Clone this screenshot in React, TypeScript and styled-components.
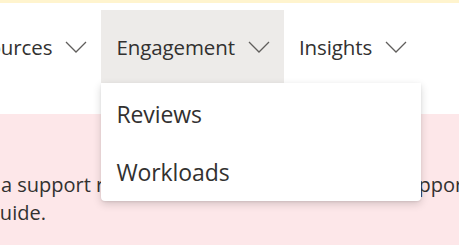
import styled, { createGlobalStyle } from "styled-components";

const GlobalStyle = createGlobalStyle`
  html, body {
    margin: 0;
    padding: 0;
    overflow: hidden;
    background: #ffffff;
  }
  body {
    font-family: "Segoe UI", "Open Sans", "Noto Sans", sans-serif;
    color: #323130;
  }
`;

const Page = styled.div`
  width: 459px;
  height: 245px;
  display: flex;
  flex-direction: column;
  overflow: hidden;
`;

const Banner = styled.div`
  height: 3px;
  background: #fff4ce;
  flex-shrink: 0;
`;

const NavBar = styled.nav`
  height: 111px;
  background: #ffffff;
  flex-shrink: 0;
  position: relative;
  z-index: 2;
`;

const NavRow = styled.ul`
  list-style: none;
  margin: 0 0 0 -60px;
  padding: 7px 0 0;
  display: flex;
`;

const NavItem = styled.li<{ $open?: boolean }>`
  position: relative;
  height: 73px;
  display: flex;
  align-items: center;
  gap: 13px;
  padding: 0 14px 0 15px;
  font-size: 20.5px;
  letter-spacing: -0.1px;
  white-space: nowrap;
  background: ${(p) => (p.$open ? "#edebe9" : "transparent")};
`;

const Chevron = () => (
  <svg width="22" height="12" viewBox="0 0 22 12" fill="none">
    <path d="M1 1 L11 11 L21 1" stroke="#605e5c" strokeWidth="1.3" />
  </svg>
);

const Menu = styled.ul`
  position: absolute;
  top: 100%;
  left: 0;
  width: 320px;
  margin: 0;
  padding: 2px 0 0;
  list-style: none;
  background: #ffffff;
  border-radius: 0 0 4px 4px;
  box-shadow: 0 3px 8px rgba(0, 0, 0, 0.16), 0 1px 2px rgba(0, 0, 0, 0.08);
`;

const MenuItem = styled.li`
  height: 58px;
  display: flex;
  align-items: center;
  padding-left: 15px;
  font-size: 23px;
  color: #323130;
`;

const Notice = styled.section`
  flex: 1;
  background: #fde7e9;
  padding-top: 57px;
`;

const NoticeText = styled.p`
  margin: 0 0 0 -11px;
  width: 500px;
  text-indent: 12px;
  font-size: 20px;
  line-height: 28px;
  color: #323130;
`;

export default function App() {
  return (
    <Page>
      <GlobalStyle />
      <Banner />
      <NavBar>
        <NavRow>
          <NavItem>
            Resources
            <Chevron />
          </NavItem>
          <NavItem $open>
            Engagement
            <Chevron />
            <Menu>
              <MenuItem>Reviews</MenuItem>
              <MenuItem>Workloads</MenuItem>
            </Menu>
          </NavItem>
          <NavItem>
            Insights
            <Chevron />
          </NavItem>
        </NavRow>
      </NavBar>
      <Notice>
        <NoticeText>
          a support request, or look for help in your support guide.
        </NoticeText>
      </Notice>
    </Page>
  );
}
